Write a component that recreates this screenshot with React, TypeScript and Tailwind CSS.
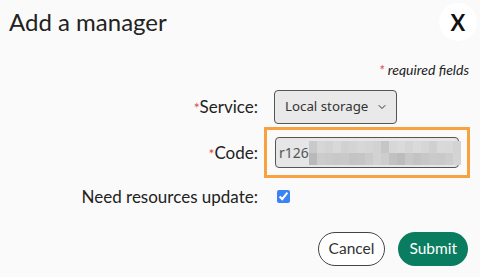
import { ChevronDown } from 'lucide-react'

const blurRows = [
  ['#c9c9c9', '#d6d6d6', '#d3d3d3', '#d8d8d8', '#d1d1d1', '#d4d4d4', '#d7d7d7', '#d5d5d5', '#d2d2d2', '#c6c6c6', '#d7d7d7', '#dadada', '#d5d5d5', '#dadada', '#d6d6d6', '#d0d0d0', '#d9d9d9', '#d8d8d8', '#d3d3d3'],
  ['#b9b9b9', '#cccccc', '#cacaca', '#c8c8c8', '#c9c9c9', '#c4c4c4', '#c5c5c5', '#cbcbcb', '#d2d2d2', '#cdcdcd', '#c1c1c1', '#bcbcbc', '#c8c8c8', '#c3c3c3', '#c7c7c7', '#cacaca', '#c9c9c9', '#cdcdcd', '#d4d4d4'],
]

export default function App() {
  return (
    <div className="w-[480px] h-[277px] bg-[#fafafa] text-[#222] font-['Lato',sans-serif] overflow-hidden">
      <div className="flex items-center justify-between pl-[9px] pr-[3px] pt-[3px]">
        <h2 className="text-[24px] leading-[38px]">Add a manager</h2>
        <button className="w-[38px] h-[38px] rounded-full bg-white flex items-center justify-center text-[22px] font-bold text-[#111]">
          X
        </button>
      </div>

      <p className="text-right pr-[11px] mt-[20px] text-[14px] italic leading-[18px]">
        <span className="text-[#e04848]">*</span> required fields
      </p>

      <div className="grid grid-cols-[258px_1fr] gap-x-[6px] items-center mt-[11px] text-[17px]">
        <label className="text-right">
          <span className="text-[#e04848] text-[14px]">*</span>Service:
        </label>
        <div className="pl-[10px]">
          <div className="w-[123px] h-[34px] rounded-[4px] border border-[#555] bg-[#e9e9e9] flex items-center justify-between pl-[10px] pr-[8px] font-['Noto_Sans',sans-serif] text-[13.3px] text-[#333]">
            <span>Local storage</span>
            <ChevronDown className="w-[12px] h-[12px]" strokeWidth={2} />
          </div>
        </div>

        <label className="text-right mt-[3px]">
          <span className="text-[#e04848] text-[14px]">*</span>Code:
        </label>
        <div className="mt-[3px] w-[206px] border-[3px] border-[#f7a23e] px-[8px] py-[7px]">
          <div className="h-[31px] rounded-[4px] border border-[#555] bg-[#e6e6e6] flex items-center pl-[3px] font-['Noto_Sans',sans-serif] text-[14px] text-[#555]">
            <span>r126</span>
            <div className="flex flex-col">
              {blurRows.map((row, i) => (
                <div key={i} className="flex">
                  {row.map((c, j) => (
                    <div key={j} className="w-[8px] h-[12px]" style={{ backgroundColor: c }} />
                  ))}
                </div>
              ))}
            </div>
          </div>
        </div>

        <label className="text-right mt-[6px]">Need resources update:</label>
        <div className="pl-[13px] mt-[6px] flex items-center">
          <input type="checkbox" defaultChecked className="w-[13px] h-[13px] m-0 accent-[#3b82f6]" />
        </div>
      </div>

      <div className="flex justify-end gap-[13px] pr-[12px] mt-[22px]">
        <button className="h-[34px] px-[10px] rounded-full border border-[#444] bg-white text-[15.5px] text-[#333]">
          Cancel
        </button>
        <button className="h-[34px] px-[11px] rounded-full bg-[#0a7c60] text-white text-[15.5px]">
          Submit
        </button>
      </div>
    </div>
  )
}
